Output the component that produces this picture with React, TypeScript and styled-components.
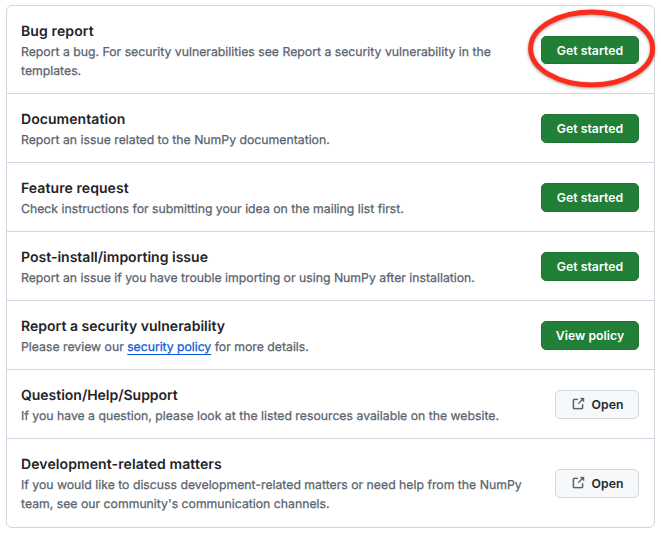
import React from 'react';
import styled, { createGlobalStyle } from 'styled-components';

const GlobalStyle = createGlobalStyle`
  * { box-sizing: border-box; }
  body { margin: 0; background: #fff; font-family: Inter, "Liberation Sans", sans-serif; text-rendering: geometricPrecision; }
`;
const Panel = styled.ul`
  list-style: none; margin: 5px 0 0 6px; padding: 0; width: 649px;
  border: 1px solid #d0d6e0; border-radius: 6px;
`;
const Row = styled.li<{ $height: number }>`
  display: flex; align-items: center; justify-content: space-between;
  height: ${p => p.$height}px; padding: 0 15px 0 14px;
  & + & { border-top: 1px solid #d3d9e1; }
`;
const Title = styled.h2<{ $tracking: number }>`
  margin: 0; padding-top: 1px; font-size: 14px; line-height: 21px; font-weight: 600; color: #1f2328; white-space: nowrap;
  letter-spacing: ${p => p.$tracking}px;
`;
const Description = styled.p`
  margin: 0; font-size: 12.25px; line-height: 19px; color: #59636e; white-space: nowrap;
  -webkit-text-stroke: 0.25px #59636e;
`;
const Link = styled.a`
  color: #0b5bd7; -webkit-text-stroke-color: #0b5bd7; letter-spacing: -0.04px;
  text-decoration: underline 1px; text-underline-offset: 3px; text-decoration-skip-ink: none;
`;
const Button = styled.button<{ $plain?: boolean; $height?: number }>`
  display: flex; align-items: center; justify-content: center; gap: 7px; padding: 0;
  width: ${p => (p.$plain ? 84 : 98)}px; height: ${p => p.$height ?? 29}px; border-radius: 5px;
  font: 600 12.25px Inter, sans-serif; letter-spacing: 0.03px;
  color: ${p => (p.$plain ? '#25292e' : '#fff')};
  background: ${p => (p.$plain ? '#f6f8fa' : '#227f38')};
  border: 1px solid ${p => (p.$plain ? '#d1d9e0' : '#1f7534')};
`;
const Spotlight = styled.div`position: relative; display: flex; margin-top: 1px;`;
const Ring = styled.svg`
  position: absolute; left: -16px; top: -31px; overflow: visible; pointer-events: none;
  filter: drop-shadow(0 1.5px 1.5px rgba(0, 0, 0, 0.4));
`;

const OpenIcon = () => (
  <svg width="14" height="14" viewBox="0 0 16 16" fill="#59636e" stroke="#59636e" strokeWidth=".2">
    <path d="M3.75 2h3.5a.75.75 0 0 1 0 1.5h-3.5a.25.25 0 0 0-.25.25v8.5c0 .138.112.25.25.25h8.5a.25.25 0 0 0 .25-.25v-3.5a.75.75 0 0 1 1.5 0v3.5A1.75 1.75 0 0 1 12.25 14h-8.5A1.75 1.75 0 0 1 2 12.25v-8.5C2 2.784 2.784 2 3.75 2Zm6.854-1h4.146a.25.25 0 0 1 .25.25v4.146a.25.25 0 0 1-.427.177L13.03 4.03 9.28 7.78a.751.751 0 0 1-1.042-.018.751.751 0 0 1-.018-1.042l3.75-3.75-1.543-1.543A.25.25 0 0 1 10.604 1Z" />
  </svg>
);

type Item = { title: string; lines: React.ReactNode[]; action: string; height?: number; tracking?: number; ringed?: boolean };
const items: Item[] = [
  { title: 'Bug report', lines: ['Report a bug. For security vulnerabilities see Report a security vulnerability in the', 'templates.'], action: 'Get started', height: 87, tracking: 0.12, ringed: true },
  { title: 'Documentation', lines: ['Report an issue related to the NumPy documentation.'], action: 'Get started', tracking: 0.06 },
  { title: 'Feature request', lines: ['Check instructions for submitting your idea on the mailing list first.'], action: 'Get started', tracking: 0.08 },
  { title: 'Post-install/importing issue', lines: ['Report an issue if you have trouble importing or using NumPy after installation.'], action: 'Get started', tracking: 0.01 },
  { title: 'Report a security vulnerability', lines: [<>Please review our <Link>security policy</Link> for more details.</>], action: 'View policy', tracking: 0.02 },
  { title: 'Question/Help/Support', lines: ['If you have a question, please look at the listed resources available on the website.'], action: 'Open', tracking: -0.02 },
  { title: 'Development-related matters', lines: ['If you would like to discuss development-related matters or need help from the NumPy', "team, see our community's communication channels."], action: 'Open', height: 89, tracking: 0.1 },
];

export default function App() {
  return (
    <>
      <GlobalStyle />
      <Panel>
        {items.map(item => {
          const plain = item.action === 'Open';
          const button = <Button $plain={plain} $height={item.ringed ? 28 : 29}>{plain && <OpenIcon />}{item.action}</Button>;
          return (
            <Row key={item.title} $height={item.height ?? 69}>
              <div>
                <Title $tracking={item.tracking ?? 0}>{item.title}</Title>
                {item.lines.map((line, i) => <Description key={i}>{line}</Description>)}
              </div>
              {item.ringed ? (
                <Spotlight>
                  {button}
                  <Ring width="130" height="86"><ellipse cx="66.6" cy="43.4" rx="61" ry="36.4" fill="none" stroke="#fb2c1c" strokeWidth="4.8" /></Ring>
                </Spotlight>
              ) : button}
            </Row>
          );
        })}
      </Panel>
    </>
  );
}
